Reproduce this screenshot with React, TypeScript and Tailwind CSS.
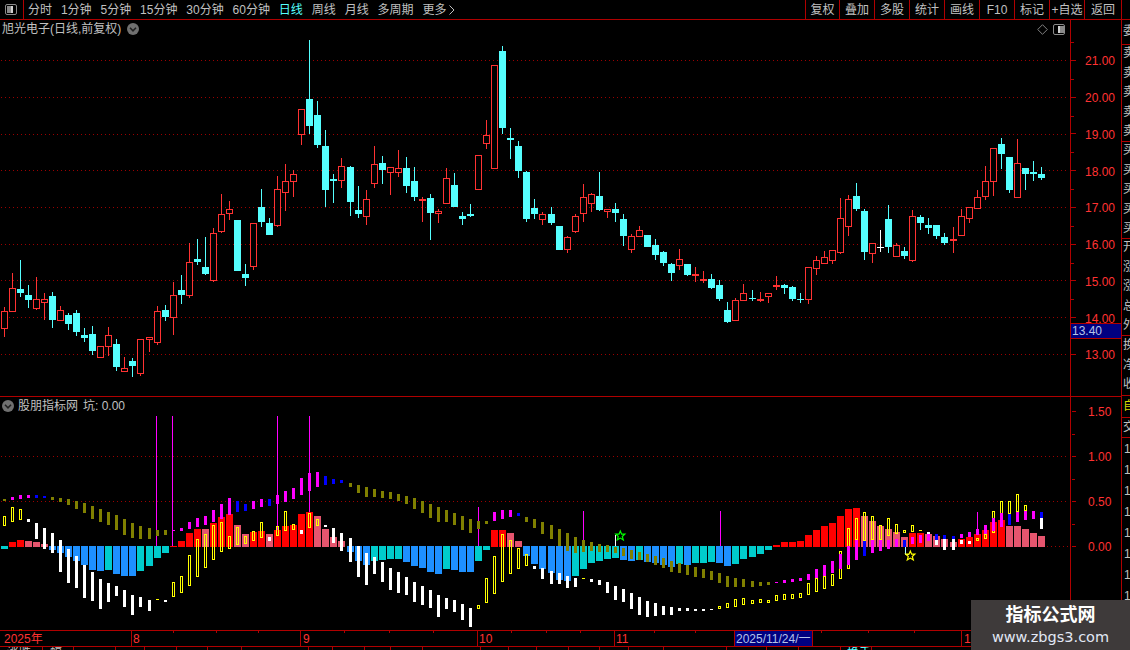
import React from "react";

const RED_LINE = "#b00000";
const FONT = '"Liberation Sans","Noto Sans CJK SC",sans-serif';

// column of the i-th trading day
const px = (i: number) => Math.floor(4.3 + 8.04 * i);

// kind, wick top, body top, body bottom, wick bottom (screen y)
const candles: [string, number, number, number, number][] = [
  ["r", 307, 311, 329, 337], ["r", 273, 288, 312, 312], ["c", 260, 289, 293, 297], ["c", 285, 295, 300, 308],
  ["r", 277, 299, 309, 310], ["r", 293, 299, 303, 320], ["c", 292, 296, 320, 328], ["r", 306, 310, 321, 321],
  ["c", 313, 315, 324, 330], ["c", 310, 313, 332, 336], ["c", 328, 335, 338, 342], ["c", 326, 334, 351, 355],
  ["r", 346, 346, 358, 358], ["r", 327, 335, 347, 356], ["c", 339, 344, 367, 371], ["r", 357, 368, 372, 372],
  ["c", 358, 361, 366, 377], ["r", 339, 339, 374, 376], ["r", 337, 337, 340, 352], ["r", 306, 311, 343, 345],
  ["c", 305, 310, 317, 321], ["r", 282, 295, 318, 335], ["c", 275, 290, 295, 304], ["r", 243, 262, 296, 298],
  ["c", 239, 259, 262, 265], ["c", 237, 267, 274, 275], ["r", 228, 233, 281, 282], ["r", 194, 214, 232, 233],
  ["r", 201, 209, 214, 220], ["c", 220, 220, 271, 271], ["c", 264, 274, 278, 286], ["r", 223, 223, 267, 270],
  ["c", 189, 207, 222, 227], ["c", 218, 223, 235, 235], ["r", 176, 189, 226, 227], ["r", 164, 181, 193, 211],
  ["r", 170, 174, 182, 197], ["r", 109, 109, 135, 145], ["c", 40, 99, 126, 134], ["c", 101, 115, 145, 148],
  ["c", 130, 146, 190, 207], ["c", 174, 179, 181, 203], ["r", 158, 166, 181, 188], ["c", 166, 167, 202, 216],
  ["c", 186, 210, 214, 218], ["r", 190, 199, 217, 225], ["r", 146, 164, 184, 188], ["c", 156, 163, 170, 184],
  ["r", 167, 167, 173, 195], ["r", 150, 168, 173, 177], ["c", 157, 168, 186, 193], ["c", 167, 181, 197, 201],
  ["r", 197, 199, 201, 222], ["c", 194, 198, 213, 240], ["r", 209, 211, 214, 223], ["r", 168, 178, 204, 204],
  ["c", 173, 185, 207, 207], ["c", 212, 216, 219, 225], ["c", 204, 214, 216, 217], ["r", 155, 155, 190, 190],
  ["r", 120, 135, 144, 149], ["r", 65, 65, 169, 169], ["c", 46, 51, 128, 134], ["c", 128, 138, 140, 159],
  ["c", 141, 146, 171, 178], ["c", 171, 172, 219, 222], ["c", 199, 208, 214, 219], ["r", 212, 214, 220, 225],
  ["c", 207, 214, 223, 225], ["c", 226, 226, 250, 250], ["r", 236, 237, 250, 253], ["r", 214, 216, 232, 233],
  ["r", 184, 197, 214, 222], ["r", 193, 194, 204, 212], ["c", 172, 196, 210, 211], ["r", 209, 209, 212, 218],
  ["c", 203, 209, 213, 222], ["c", 214, 219, 236, 246], ["r", 234, 236, 250, 253], ["r", 226, 230, 237, 237],
  ["c", 235, 235, 247, 247], ["c", 239, 245, 255, 260], ["c", 251, 252, 263, 266], ["c", 263, 264, 273, 281],
  ["r", 249, 259, 266, 270], ["c", 264, 264, 275, 276], ["r", 267, 274, 276, 282], ["r", 271, 279, 281, 283],
  ["c", 274, 279, 288, 289], ["c", 280, 285, 299, 301], ["c", 302, 310, 322, 323], ["r", 298, 300, 321, 321],
  ["r", 284, 293, 301, 301], ["c", 290, 298, 299, 301], ["r", 292, 299, 301, 302], ["r", 293, 293, 297, 303],
  ["r", 276, 285, 287, 290], ["c", 284, 285, 288, 294], ["c", 286, 287, 299, 301], ["c", 293, 299, 300, 303],
  ["r", 267, 267, 300, 304], ["r", 256, 260, 269, 275], ["r", 251, 257, 264, 264], ["r", 250, 250, 261, 264],
  ["r", 198, 218, 253, 254], ["r", 195, 199, 227, 236], ["c", 183, 196, 209, 211], ["c", 209, 211, 252, 260],
  ["r", 243, 243, 254, 263], ["w", 230, 247, 248, 252], ["c", 205, 219, 247, 253], ["r", 243, 245, 257, 257],
  ["c", 247, 251, 256, 259], ["r", 210, 216, 261, 262], ["c", 215, 217, 223, 230], ["c", 218, 225, 228, 234],
  ["c", 225, 225, 236, 239], ["c", 233, 237, 243, 245], ["r", 227, 239, 241, 253], ["r", 209, 216, 236, 236],
  ["r", 207, 207, 219, 223], ["r", 190, 197, 209, 209], ["r", 166, 181, 197, 200], ["r", 148, 148, 182, 196],
  ["c", 138, 144, 154, 169], ["c", 157, 157, 190, 193], ["r", 139, 163, 198, 198], ["c", 168, 168, 174, 190],
  ["c", 161, 172, 174, 181], ["c", 167, 174, 178, 180],
];

const candleColor: Record<string, string> = { r: "#ff3232", c: "#55ffff", w: "#ffffff" };

// histogram: colour letter + far end of the bar, the near end sits on the zero line
const hist =
  "c549 r542 r540 p541 p542 p544 b550 b553 b557 b561 b565 b570 b571 c570 b574 b576 b576 c571 c566 c558 c553 r546 r541 r533 r529 p529 r523 r517 r514 p525 p534 r532 r531 p534 r530 r526 r525 r514 r512 p516 p529 p537 p541 b552 b561 b565 c561 c560 c559 c559 b562 b566 b568 b572 b574 c569 b570 b572 b572 c561 c550 r530 r530 p533 p541 b556 b564 b569 b573 b580 b581 c576 c569 c563 c561 c559 c558 b560 b561 c560 b562 b563 b565 b567 c564 b565 c563 c563 c562 b563 b566 c564 c559 c557 c554 c550 r545 r542 r542 r541 r535 r530 r526 r523 r516 r509 r508 p516 p521 p526 p529 p532 p537 r533 r533 p534 p536 p539 p542 r539 r537 r534 r530 r522 r520 p526 p526 p529 p533 p536".split(" ");

// upper ribbon
const ribbon =
  "o499-501 m497-500 m495-499 m495-498 u495-498 u496-498 o497-500 o498-502 o499-505 o501-509 o503-513 o506-519 o509-522 o512-525 o515-530 o519-535 o523-538 o526-539 o528-539 o530-536 o530-535 m530-531 m528-531 m522-529 m518-527 m516-525 m510-522 m504-519 m498-515 u501-512 u504-511 m501-509 m499-507 u499-506 m495-504 m491-502 m488-499 m478-495 m473-491 m472-487 u476-485 u479-484 u480-483 o483-487 o485-493 o487-497 o489-497 o491-498 o492-499 o494-501 o496-504 o498-509 o501-513 o504-518 o507-522 o510-522 o513-525 o516-530 o519-533 o521-529 o521-524 m512-521 m510-519 m510-517 u513-516 o517-522 o519-528 o522-534 o525-539 o529-546 o533-551 o537-553 o540-552 o542-551 o544-552 o545-552 o547-553 o548-556 o550-559 o552-560 o554-562 o556-565 o558-568 o561-572 o563-573 o565-575 o567-577 o569-578 o571-580 o573-583 o576-587 o578-587 o579-587 o581-587 o582-586 o582-585 m582-583 m580-583 m579-582 m578-581 m574-580 m569-578 m565-576 m561-573 m554-569 m546-565 m540-560 u541-556 m540-553 m540-551 m540-549 m539-547 u540-547 m537-544 m535-543 m534-541 u534-540 u535-539 u536-539 m534-538 m532-537 m529-535 m525-534 m518-531 m513-527 u514-525 m512-522 m511-520 m511-519 u512-518".split(" ");

// lower ribbon, white is filled and yellow is hollow
const lower =
  "y516-526 y507-522 y509-520 w519-522 w523-539 w528-549 w533-553 w540-572 w549-583 w556-588 w565-598 w572-601 w579-609 w583-602 w586-596 w590-607 w595-615 w597-607 w600-611 y599-600 w600-602 y582-597 y576-593 y555-586 y539-577 y534-568 y525-560 y522-552 y536-549 y527-545 y536-544 y531-541 y522-538 w537-541 y526-536 y511-531 y524-530 w530-534 y513-528 y519-526 w525-527 w528-543 w533-551 w538-562 w546-577 w553-585 w557-574 w562-582 w568-590 w572-593 w577-595 w582-602 w586-605 w590-608 w595-617 w598-609 w600-612 w604-620 w608-627 y605-609 y578-603 y556-594 y534-582 y540-574 y548-569 y554-566 w566-569 w568-579 w571-584 w573-584 w576-588 w578-587 y578-579 w579-582 w580-585 w582-593 w586-600 w589-602 w593-609 w597-615 w601-617 w603-616 w606-615 w607-615 w608-611 w608-611 w609-611 w609-611 w609-610 y606-609 y603-608 y599-607 y598-605 y600-604 y599-603 y600-603 y595-601 y594-600 y594-599 y593-598 y583-595 y578-592 y576-589 y574-586 y551-579 y528-569 y518-540 y512-541 y516-540 y525-540 y518-536 y524-534 y530-533 y525-532 y530-531 w532-534 w540-545 w539-550 w539-550 w540-544 w541-544 y538-541 y534-539 y511-533 y501-520 y501-514 y494-512 y505-511 - w518-529".split(" ");

const histColor: Record<string, string> = { r: "#ff0000", p: "#e6556e", c: "#00cccc", b: "#1e90ff" };
const ribbonColor: Record<string, string> = { o: "#808000", m: "#ff00ff", u: "#0000ff" };

// magenta needles: x, top, bottom
const spikes = [[156, 416, 546], [172, 416, 546], [277, 416, 546], [309, 416, 546], [478, 507, 546], [583, 511, 546], [720, 511, 546], [977, 512, 529]];

const parseRange = (s: string) => {
  const [a, b] = s.slice(1).split("-").map(Number);
  return { kind: s[0], top: a, bottom: b };
};

function Candles() {
  return (
    <svg width={1070} height={376} viewBox="0 20 1070 376" shapeRendering="crispEdges" className="block">
      {[60, 97, 134, 170, 207, 244, 280, 317, 354].map((y) => (
        <line key={y} x1={1} x2={1068} y1={y + 0.5} y2={y + 0.5} stroke="#9c0000" strokeDasharray="1 3" />
      ))}
      {candles.map(([k, wt, bt, bb, wb], i) => {
        const x = px(i);
        const color = candleColor[k];
        return (
          <g key={i}>
            <rect x={x} y={wt} width={1} height={wb - wt} fill={color} />
            {k === "r" && bb - bt > 2 ? (
              <rect x={x - 2.5} y={bt + 0.5} width={6} height={bb - bt - 1} fill="#000" stroke={color} />
            ) : (
              <rect x={x - 3} y={bt} width={7} height={Math.max(bb - bt, 1)} fill={color} />
            )}
          </g>
        );
      })}
    </svg>
  );
}

function Star({ x, y, color }: { x: number; y: number; color: string }) {
  return (
    <polygon
      points={`${x},${y - 4.5} ${x + 1.3},${y - 1.3} ${x + 4.5},${y - 1.3} ${x + 2},${y + 1} ${x + 3},${y + 4.5} ${x},${y + 2.6} ${x - 3},${y + 4.5} ${x - 2},${y + 1} ${x - 4.5},${y - 1.3} ${x - 1.3},${y - 1.3}`}
      fill="none"
      stroke={color}
      strokeWidth={1.2}
    />
  );
}

function Indicator() {
  return (
    <svg width={1070} height={233} viewBox="0 397 1070 233" className="block">
      <g shapeRendering="crispEdges">
        {[456, 501].map((y) => (
          <line key={y} x1={1} x2={1068} y1={y + 0.5} y2={y + 0.5} stroke="#9c0000" strokeDasharray="1 3" />
        ))}
        <line x1={1047} x2={1068} y1={546.5} y2={546.5} stroke="#9c0000" strokeDasharray="1 3" />
        {spikes.map(([x, a, b]) => (
          <rect key={x} x={x} y={a} width={1} height={b - a} fill="#ff00ff" />
        ))}
        {hist.map((s, i) => {
          const y = Number(s.slice(1));
          const up = s[0] === "r" || s[0] === "p";
          return (
            <rect key={i} x={px(i) - 3} y={up ? y : 546} width={7} height={up ? 547 - y : y - 546} fill={histColor[s[0]]} />
          );
        })}
        {lower.map((s, i) => {
          if (s === "-") return null;
          const { kind, top, bottom } = parseRange(s);
          if (kind === "w" || bottom - top < 3) {
            return <rect key={i} x={px(i) - 1} y={top} width={3} height={bottom - top} fill={kind === "w" ? "#fff" : "#ff0"} />;
          }
          return <rect key={i} x={px(i) - 0.5} y={top + 0.5} width={2} height={bottom - top - 1} fill="none" stroke="#ff0" />;
        })}
        {ribbon.map((s, i) => {
          const { kind, top, bottom } = parseRange(s);
          return <rect key={i} x={px(i) - 1} y={top} width={3} height={bottom - top} fill={ribbonColor[kind]} />;
        })}
        <rect x={615} y={535} width={1} height={11} fill="#fff" />
        <rect x={905} y={547} width={1} height={8} fill="#aaffff" />
        <rect x={905} y={554} width={4} height={1} fill="#aaffff" />
      </g>
      <Star x={620.3} y={535.5} color="#00ff00" />
      <Star x={910.3} y={555.5} color="#ffff00" />
    </svg>
  );
}

function ToggleButton() {
  return (
    <svg width={12} height={12} viewBox="0 0 12 12" fill="none">
      <circle cx={6} cy={6} r={6} fill="#707070" />
      <path d="M3 4.8 L6 7.8 L9 4.8" stroke="#202020" strokeWidth={1.6} />
    </svg>
  );
}

function PanelIcon({ flip }: { flip?: boolean }) {
  return (
    <svg width={13} height={11} viewBox="0 0 13 11" shapeRendering="crispEdges" fill="none">
      <rect x={0.5} y={0.5} width={11} height={10} rx={1.5} stroke="#8a8a8a" shapeRendering="auto" />
      <rect x={flip ? 7 : 2} y={2} width={4} height={7} fill="#8a8a8a" />
      <rect x={flip ? 5 : 6} y={2} width={2} height={7} fill="#d0d0d0" />
    </svg>
  );
}

function PriceAxis() {
  const labels = ["21.00", "20.00", "19.00", "18.00", "17.00", "16.00", "15.00", "14.00", "13.00"];
  return (
    <div className="relative w-[51px] h-full border-r border-[#b00000] overflow-hidden">
      <div className="pt-[22px]">
        {labels.map((v) => (
          <div key={v} className="relative h-[36.75px] flex items-center text-[12px] text-[#ff3232]">
            <span className="w-[5px] h-px bg-[#b00000]" />
            <span className="ml-[9px] mt-[2px]">{v}</span>
            <span className="absolute left-0 top-0 w-[3px] h-px bg-[#b00000]" />
          </div>
        ))}
      </div>
      <div className="absolute left-0 right-0 top-[303px] h-[16px] bg-[#000080] border-y border-[#b00000] flex items-center pl-px text-[12px] text-[#b4c4e8]">
        13.40
      </div>
    </div>
  );
}

function IndicatorAxis() {
  const labels = ["1.50", "1.00", "0.50", "0.00"];
  return (
    <div className="w-[51px] h-full border-r border-[#b00000] overflow-hidden">
      <div className="-mt-[8.5px]">
        {labels.map((v) => (
          <div key={v} className="relative h-[45px] flex items-center text-[12px] text-[#ff3232]">
            <span className="ml-px w-[4px] h-px bg-[#b00000]" />
            <span className="ml-[12px] mt-[2px]">{v}</span>
            <span className="absolute left-px top-0 w-[3px] h-px bg-[#b00000]" />
          </div>
        ))}
      </div>
    </div>
  );
}

function TimeAxis() {
  const cells = [
    { w: "w-[132px]", pl: "pl-[4px]", text: "2025年" },
    { w: "w-[169px]", pl: "pl-[1px]", text: "8" },
    { w: "w-[177px]", pl: "pl-[2px]", text: "9" },
    { w: "w-[137px]", pl: "pl-[1px]", text: "10" },
    { w: "w-[120px]", pl: "pl-[1px]", text: "11" },
  ];
  const ticks = [173, 216, 258, 344, 389, 433, 511, 546, 580, 654, 695, 821, 868, 914];
  return (
    <div className="relative flex h-[16px] w-[1122px] border-b border-[#b00000] text-[12px] leading-[17px] text-[#ff3232]">
      <svg width={1122} height={3} className="absolute left-0 top-0" shapeRendering="crispEdges">
        {ticks.map((x) => (
          <rect key={x} x={x} y={0} width={1} height={2} fill={RED_LINE} />
        ))}
      </svg>
      {cells.map((c) => (
        <div key={c.text} className={`${c.w} ${c.pl} shrink-0 border-r border-[#b00000]`}>
          {c.text}
        </div>
      ))}
      <div className="w-[78px] shrink-0 bg-[#000080] pl-px text-[#b4c4e8] border-r border-[#b00000] whitespace-nowrap">2025/11/24/一</div>
      <div className="w-[149px] shrink-0 border-r border-[#b00000]" />
      <div className="pl-[2px]">1</div>
    </div>
  );
}

function StatsRow() {
  const ticks = [42, 73, 115, 144, 176, 207, 241, 308, 332, 364, 390, 422, 480, 508, 536, 568, 599, 628, 663, 726, 766, 798, 840, 871];
  return (
    <div className="relative flex h-[3px] w-[1122px] overflow-hidden text-[12px] leading-[12px] text-[#c0c0c0]">
      <svg width={1122} height={3} className="absolute left-0 top-0" shapeRendering="crispEdges">
        {ticks.map((x) => (
          <rect key={x} x={x} y={0} width={1} height={3} fill={RED_LINE} />
        ))}
      </svg>
      <span className="ml-[7px] w-[43px]">涨跌</span>
      <span className="w-[797px]">幅</span>
      <span className="text-[#55ffff]">换手</span>
    </div>
  );
}

function SideStrip() {
  const groups = [
    { h: "h-[25px]", chars: ["委"] },
    { h: "h-[97px]", chars: ["卖", "卖", "卖", "卖", "卖"] },
    { h: "h-[97px]", chars: ["买", "买", "买", "买", "买"] },
    { h: "h-[97px]", chars: ["开", "涨", "涨", "总", "外"] },
    { h: "h-[60px]", chars: ["换", "净", "收"] },
  ];
  return (
    <div className="w-[8px] shrink-0 overflow-hidden text-[12px] leading-[19.4px] text-[#c0c0c0] whitespace-nowrap">
      {groups.map((g, i) => (
        <div key={i} className={`${g.h} border-b border-[#b00000] pl-px overflow-hidden flex flex-col justify-center`}>
          {g.chars.map((c, j) => (
            <span key={j} className="block">{c}</span>
          ))}
        </div>
      ))}
      <div className="h-[22px] border-b border-[#b00000] pl-px text-[#d8d800] leading-[21px]">自选</div>
      <div className="h-[20px] border-b border-[#b00000] pl-px leading-[19px]">交易</div>
      <div className="pl-[2px] pt-[1px] leading-[21px]">
        {["12.34", "12.30", "12.28", "12.25", "12.20", "12.18", "12.15", "12.11", "12.08"].map((v) => (
          <div key={v}>{v}</div>
        ))}
      </div>
    </div>
  );
}

export default function App() {
  const tabs = ["分时", "1分钟", "5分钟", "15分钟", "30分钟", "60分钟", "日线", "周线", "月线", "多周期"];
  const actions = ["复权", "叠加", "多股", "统计", "画线", "F10", "标记", "+自选", "返回"];
  return (
    <div className="relative w-[1130px] h-[650px] bg-black overflow-hidden" style={{ fontFamily: FONT }}>
      {/* top toolbar */}
      <div className="flex items-stretch justify-between h-[20px] border-b border-[#b00000] text-[12px] text-[#c0c0c0]">
        <div className="flex items-center">
          <div className="w-[24px] h-full flex items-center justify-center border-r border-[#b00000]">
            <PanelIcon />
          </div>
          <div className="flex items-center gap-[8.9px] ml-[4px]">
            {tabs.map((t) => (
              <span key={t} className={t === "日线" ? "text-[#55ffff]" : ""}>
                {t}
              </span>
            ))}
            <span className="flex items-center gap-[3px]">
              更多
              <svg width={6} height={10} viewBox="0 0 6 10" fill="none">
                <path d="M0.5 0.5 L5 5 L0.5 9.5" stroke="#c0c0c0" />
              </svg>
            </span>
          </div>
        </div>
        <div className="flex mr-[8px]">
          {actions.map((a, i) => (
            <div
              key={a}
              className={`flex items-center justify-center border-l border-[#b00000] ${i === 0 ? "w-[34px]" : i === 8 ? "w-[38px] border-r" : "w-[35px]"}`}
            >
              {a}
            </div>
          ))}
        </div>
      </div>

      <div className="flex">
        <div className="w-[1122px] shrink-0">
          {/* price pane */}
          <div className="flex h-[377px] border-b border-[#b00000]">
            <div className="relative w-[1071px] shrink-0 border-r border-[#b00000]">
              <Candles />
              <div className="absolute left-[2px] top-0 h-[18px] flex items-center gap-[6px] text-[12px] text-[#c0c0c0]">
                旭光电子(日线,前复权)
                <ToggleButton />
              </div>
              <div className="absolute left-[1037px] top-[4px] flex items-center gap-[5px]">
                <svg width={11} height={11} viewBox="0 0 11 11" fill="none">
                  <path d="M5.5 0.7 L10.3 5.5 L5.5 10.3 L0.7 5.5 Z" stroke="#808080" />
                </svg>
                <PanelIcon flip />
              </div>
            </div>
            <PriceAxis />
          </div>

          {/* indicator pane */}
          <div className="flex h-[234px] border-b border-[#b00000]">
            <div className="relative w-[1071px] shrink-0 border-r border-[#b00000]">
              <Indicator />
              <div className="absolute left-[2px] top-0 h-[18px] flex items-center text-[12px] text-[#c0c0c0]">
                <ToggleButton />
                <span className="ml-[4px]">股朋指标网</span>
                <span className="ml-[5px]">坑: 0.00</span>
              </div>
            </div>
            <IndicatorAxis />
          </div>

          <TimeAxis />
          <StatsRow />
        </div>
        <SideStrip />
      </div>

      {/* site watermark */}
      <div className="absolute right-0 bottom-0 w-[159px] h-[50px] bg-[#3e3a3a] flex flex-col items-center justify-center">
        <div className="text-[18px] leading-[24px] font-bold text-white">指标公式网</div>
        <div className="text-[14.5px] leading-[20px] text-[#e2e8f5] font-['DejaVu_Sans',sans-serif]">www.zbgs3.com</div>
      </div>
    </div>
  );
}
